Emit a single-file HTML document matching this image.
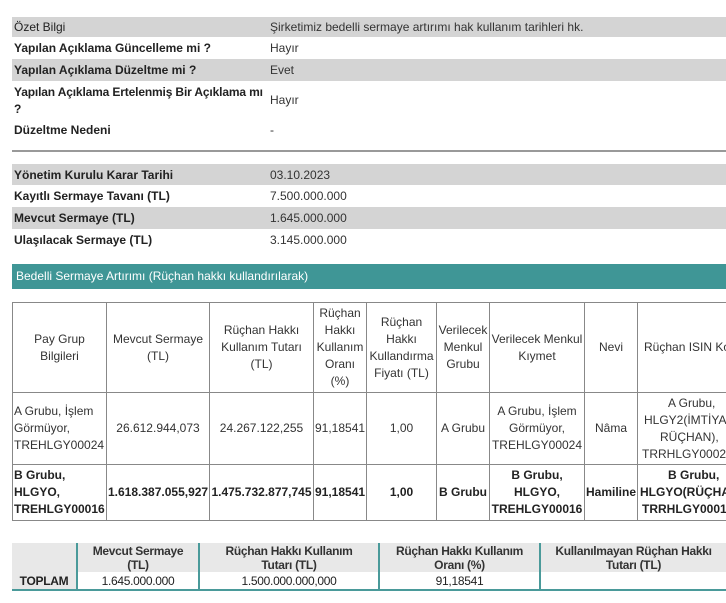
<!DOCTYPE html>
<html><head><meta charset="utf-8"><style>
body{margin:0;width:726px;height:603px;overflow:hidden;background:#fff;font-family:"Liberation Sans",Arial,sans-serif;font-size:12px;color:#222;position:relative}
.r{position:absolute;left:12px;width:714px;}
.g{background:#d4d4d4}
.l{position:absolute;left:2px;font-weight:bold;color:#222}
.v{position:absolute;left:258px;color:#333}
.ban{position:absolute;left:12px;top:264px;width:714px;height:25px;background:#3f9696;color:#fff;line-height:25px;}
.ban span{padding-left:4px}
table{border-collapse:collapse;position:absolute;table-layout:fixed}
#m{left:12px;top:302px;width:760px}
#m td{border:1px solid #888;text-align:center;color:#333;padding:0 1px;line-height:17px;vertical-align:middle;overflow:hidden}
#m tr.b td{font-weight:bold;color:#222}
#t{left:12px;top:543px;width:714px}
#t td{text-align:center;line-height:14px;border-left:2px solid #4a9a9a;padding:0 6px;letter-spacing:-0.3px}
#t tr.h td{background:#e8e8e8;font-weight:bold;color:#333;height:29px}
#t tr.d td{height:17px;border-bottom:2px solid #4a9a9a}
</style></head><body>
<div class="r g" style="top:17px;height:20px"><span class="l" style="top:3px;font-weight:normal">Özet Bilgi</span><span class="v" style="top:3px">Şirketimiz bedelli sermaye artırımı hak kullanım tarihleri hk.</span></div>
<div class="r" style="top:37px;height:22px"><span class="l" style="top:4px">Yapılan Açıklama Güncelleme mi ?</span><span class="v" style="top:4px">Hayır</span></div>
<div class="r g" style="top:59px;height:22px"><span class="l" style="top:4px">Yapılan Açıklama Düzeltme mi ?</span><span class="v" style="top:4px">Evet</span></div>
<div class="r" style="top:81px;height:37px"><span class="l" style="top:3px;white-space:nowrap;line-height:17px;letter-spacing:-0.15px">Yapılan Açıklama Ertelenmiş Bir Açıklama mı<br>?</span><span class="v" style="top:12px">Hayır</span></div>
<div class="r" style="top:118px;height:24px"><span class="l" style="top:5px">Düzeltme Nedeni</span><span class="v" style="top:5px">-</span></div>
<div class="r" style="top:150px;height:2px;background:#999"></div>
<div class="r g" style="top:164px;height:21px"><span class="l" style="top:4px">Yönetim Kurulu Karar Tarihi</span><span class="v" style="top:4px">03.10.2023</span></div>
<div class="r" style="top:185px;height:22px"><span class="l" style="top:4px">Kayıtlı Sermaye Tavanı (TL)</span><span class="v" style="top:4px">7.500.000.000</span></div>
<div class="r g" style="top:207px;height:22px"><span class="l" style="top:4px">Mevcut Sermaye (TL)</span><span class="v" style="top:4px">1.645.000.000</span></div>
<div class="r" style="top:229px;height:22px"><span class="l" style="top:4px">Ulaşılacak Sermaye (TL)</span><span class="v" style="top:4px">3.145.000.000</span></div>
<div class="ban"><span>Bedelli Sermaye Artırımı (Rüçhan hakkı kullandırılarak)</span></div>
<table id="m">
<colgroup><col style="width:94px"><col style="width:103px"><col style="width:104px"><col style="width:53px"><col style="width:70px"><col style="width:53px"><col style="width:95px"><col style="width:53px"><col style="width:135px"></colgroup>
<tr style="height:90px"><td>Pay Grup Bilgileri</td><td>Mevcut Sermaye (TL)</td><td>Rüçhan Hakkı Kullanım Tutarı (TL)</td><td>Rüçhan Hakkı Kullanım Oranı (%)</td><td>Rüçhan Hakkı Kullandırma Fiyatı (TL)</td><td>Verilecek Menkul Grubu</td><td>Verilecek Menkul Kıymet</td><td>Nevi</td><td style="text-align:left;padding-left:6px">Rüçhan ISIN Kodu</td></tr>
<tr style="height:72px"><td style="text-align:left">A Grubu, İşlem Görmüyor, TREHLGY00024</td><td>26.612.944,073</td><td>24.267.122,255</td><td>91,18541</td><td>1,00</td><td>A Grubu</td><td>A Grubu, İşlem Görmüyor, TREHLGY00024</td><td>Nâma</td><td style="text-align:left;padding-left:30px;white-space:nowrap">A Grubu,<br><span style="margin-left:-24px">HLGY2(İMTİYAZLI</span><br><span style="margin-left:-8px">RÜÇHAN),</span><br><span style="margin-left:-26px">TRRHLGY00024</span></td></tr>
<tr class="b" style="height:56px"><td style="text-align:left">B Grubu, HLGYO, TREHLGY00016</td><td>1.618.387.055,927</td><td>1.475.732.877,745</td><td>91,18541</td><td>1,00</td><td>B Grubu</td><td>B Grubu, HLGYO, TREHLGY00016</td><td>Hamiline</td><td style="text-align:left;padding-left:30px;white-space:nowrap">B Grubu,<br><span style="margin-left:-28px">HLGYO(RÜÇHAN),</span><br><span style="margin-left:-26px">TRRHLGY00016</span></td></tr>
</table>
<table id="t">
<colgroup><col style="width:65px"><col style="width:122px"><col style="width:180px"><col style="width:161px"><col style="width:186px"></colgroup>
<tr class="h"><td style="border-left:none"></td><td>Mevcut Sermaye (TL)</td><td>Rüçhan Hakkı Kullanım<br>Tutarı (TL)</td><td>Rüçhan Hakkı Kullanım Oranı (%)</td><td>Kullanılmayan Rüçhan Hakkı Tutarı (TL)</td></tr>
<tr class="d"><td style="border-left:none;background:#e8e8e8;font-weight:bold">TOPLAM</td><td>1.645.000.000</td><td>1.500.000.000,000</td><td>91,18541</td><td></td></tr>
</table>
</body></html>
